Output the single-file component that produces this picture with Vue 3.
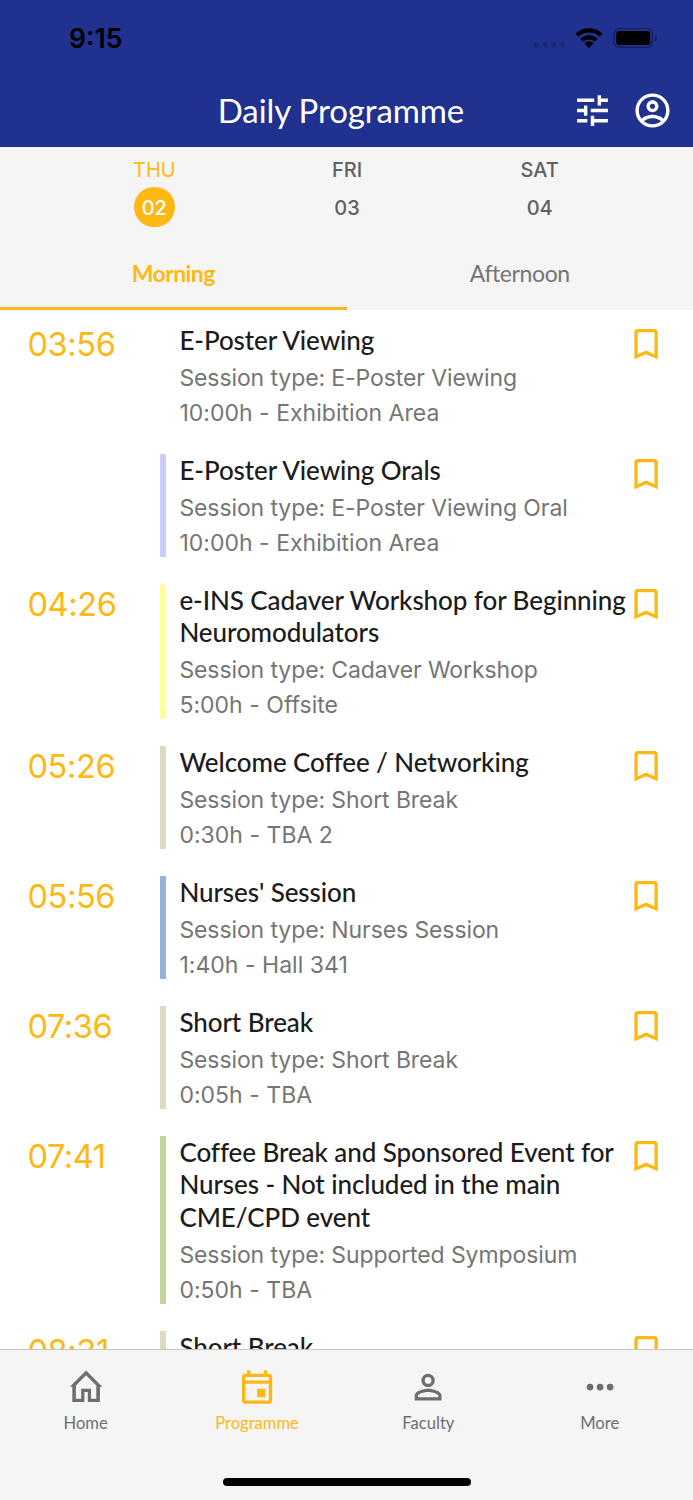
<!-- DailyProgramme.vue -->
<template>
  <div class="screen">
    <header class="header">
      <div class="status-bar">
        <span class="clock">9:15</span>
        <svg class="status-icons" viewBox="0 0 124 24">
          <g fill="#1b2873">
            <rect x="1" y="16" width="5.4" height="5.4" rx="1.8" />
            <rect x="9.4" y="16" width="5.4" height="5.4" rx="1.8" />
            <rect x="17.8" y="16" width="5.4" height="5.4" rx="1.8" />
            <rect x="26.2" y="16" width="5.4" height="5.4" rx="1.8" />
          </g>
          <g fill="none" stroke="#000" stroke-width="4.3">
            <path d="M44 9.2A17.6 17.6 0 0 1 68 9.2" />
            <path d="M48.7 14.2A10.6 10.6 0 0 1 63.3 14.2" />
          </g>
          <path d="M51.4 17.2A6.6 6.6 0 0 1 60.6 17.2L56 22.2Z" />
          <rect x="80.9" y="2.6" width="38.6" height="18.8" rx="5.4" fill="none" stroke="#151f5e" stroke-width="1.4" />
          <rect x="83.2" y="4.9" width="34" height="14.2" rx="3.4" />
          <path d="M122 8.8C124.4 10 124.4 14 122 15.2Z" fill="#151f5e" />
        </svg>
      </div>
      <div class="title-bar">
        <h1 class="page-title">Daily Programme</h1>
        <div class="actions">
          <svg class="action-icon" viewBox="0 0 24 24"><path :d="icons.tune" /></svg>
          <svg class="action-icon" viewBox="0 0 24 24"><path :d="icons.profile" /></svg>
        </div>
      </div>
    </header>

    <section class="filters">
      <div class="days">
        <button
          v-for="day in days"
          :key="day.date"
          class="day"
          :class="{ active: day.date === activeDay }"
          @click="activeDay = day.date"
        >
          <span class="day-name">{{ day.name }}</span>
          <span class="day-date">{{ day.date }}</span>
        </button>
      </div>
      <div class="periods">
        <button
          v-for="period in periods"
          :key="period"
          class="period"
          :class="{ active: period === activePeriod }"
          @click="activePeriod = period"
        >
          {{ period }}
        </button>
      </div>
    </section>

    <main class="sessions">
      <article v-for="(session, i) in sessions" :key="i" class="session">
        <span class="time">{{ session.time }}</span>
        <div class="details" :style="{ borderLeftColor: session.color }">
          <h2 class="session-title">{{ session.title }}</h2>
          <p v-if="session.type" class="meta">Session type: {{ session.type }}</p>
          <p v-if="session.info" class="meta info">{{ session.info }}</p>
        </div>
        <svg class="bookmark" viewBox="0 0 24 24"><path :d="icons.bookmark" /></svg>
      </article>
    </main>

    <footer class="footer">
      <nav class="nav">
        <a v-for="item in nav" :key="item.label" class="nav-item" :class="{ active: item.active }">
          <svg class="nav-icon" :viewBox="item.viewBox"><path fill-rule="evenodd" :d="item.icon" /></svg>
          <span class="nav-label">{{ item.label }}</span>
        </a>
      </nav>
      <div class="home-indicator"></div>
    </footer>
  </div>
</template>

<script setup>
import { ref } from 'vue'

const activeDay = ref('02')
const activePeriod = ref('Morning')

const days = [
  { name: 'THU', date: '02' },
  { name: 'FRI', date: '03' },
  { name: 'SAT', date: '04' }
]

const periods = ['Morning', 'Afternoon']

const sessions = [
  { time: '03:56', color: '#ffffff', title: 'E-Poster Viewing', type: 'E-Poster Viewing', info: '10:00h - Exhibition Area' },
  { time: '', color: '#ccccff', title: 'E-Poster Viewing Orals', type: 'E-Poster Viewing Oral', info: '10:00h - Exhibition Area' },
  { time: '04:26', color: '#ffff99', title: 'e-INS Cadaver Workshop for Beginning\nNeuromodulators', type: 'Cadaver Workshop', info: '5:00h - Offsite' },
  { time: '05:26', color: '#ddd9c3', title: 'Welcome Coffee / Networking', type: 'Short Break', info: '0:30h - TBA 2' },
  { time: '05:56', color: '#95b3d7', title: "Nurses' Session", type: 'Nurses Session', info: '1:40h - Hall 341' },
  { time: '07:36', color: '#ddd9c3', title: 'Short Break', type: 'Short Break', info: '0:05h - TBA' },
  { time: '07:41', color: '#c2d69b', title: 'Coffee Break and Sponsored Event for\nNurses - Not included in the main\nCME/CPD event', type: 'Supported Symposium', info: '0:50h - TBA' },
  { time: '08:31', color: '#ddd9c3', title: 'Short Break' }
]

const icons = {
  tune: 'M3 17v2h6v-2H3zM3 5v2h10V5H3zm10 16v-2h8v-2h-8v-2h-2v6h2zM7 9v2H3v2h4v2h2V9H7zm14 4v-2H11v2h10zm-6-4h2V7h4V5h-4V3h-2v6z',
  profile: 'M12 2A10 10 0 0 0 2 12A10 10 0 0 0 12 22A10 10 0 0 0 22 12A10 10 0 0 0 12 2M7.07 18.28C7.5 17.38 10.12 16.5 12 16.5C13.88 16.5 16.5 17.38 16.93 18.28C15.57 19.36 13.86 20 12 20C10.14 20 8.43 19.36 7.07 18.28M18.36 16.83C16.93 15.09 13.46 14.5 12 14.5C10.54 14.5 7.07 15.09 5.64 16.83C4.62 15.5 4 13.82 4 12C4 7.59 7.59 4 12 4C16.41 4 20 7.59 20 12C20 13.82 19.38 15.5 18.36 16.83M12 6C10.06 6 8.5 7.56 8.5 9.5C8.5 11.44 10.06 13 12 13C13.94 13 15.5 11.44 15.5 9.5C15.5 7.56 13.94 6 12 6M12 11A1.5 1.5 0 0 1 10.5 9.5A1.5 1.5 0 0 1 12 8A1.5 1.5 0 0 1 13.5 9.5A1.5 1.5 0 0 1 12 11Z',
  bookmark: 'M17 18L12 15.82L7 18V5H17M17 3H7A2 2 0 0 0 5 5V21L12 18L19 21V5C19 3.89 18.1 3 17 3Z'
}

const nav = [
  {
    label: 'Home',
    viewBox: '-2.1 -1 40.2 40.2',
    icon: 'M18 2.5L34.2 18.7H31.8V34H19.7V24H16.3V34H4.2V18.7H1.8ZM18 7.2L28.2 17.4V30.7H22.9V20.8H13.1V30.7H7.8V17.4Z'
  },
  {
    label: 'Programme',
    viewBox: '0 -1 24 24',
    active: true,
    icon: 'M19 3H18V1H16V3H8V1H6V3H5A2 2 0 0 0 3 5V19A2 2 0 0 0 5 21H19A2 2 0 0 0 21 19V5A2 2 0 0 0 19 3M19 19H5V9H19V19M19 7H5V5H19V7M12 12H17V17H12Z'
  },
  {
    label: 'Faculty',
    viewBox: '0 0 24 24',
    icon: 'M12 4A4 4 0 0 1 16 8A4 4 0 0 1 12 12A4 4 0 0 1 8 8A4 4 0 0 1 12 4M12 6A2 2 0 0 0 10 8A2 2 0 0 0 12 10A2 2 0 0 0 14 8A2 2 0 0 0 12 6M12 13C14.67 13 20 14.33 20 17V20H4V17C4 14.33 9.33 13 12 13M12 14.9C9.03 14.9 5.9 16.36 5.9 17V18.1H18.1V17C18.1 16.36 14.97 14.9 12 14.9Z'
  },
  {
    label: 'More',
    viewBox: '0 0 24 24',
    icon: 'M16 12A2 2 0 0 1 20 12A2 2 0 0 1 16 12M10 12A2 2 0 0 1 14 12A2 2 0 0 1 10 12M4 12A2 2 0 0 1 8 12A2 2 0 0 1 4 12Z'
  }
]
</script>

<style>
body {
  margin: 0;
  background: #fff;
}
</style>

<style scoped>
.screen {
  width: 693px;
  height: 1500px;
  display: flex;
  flex-direction: column;
  overflow: hidden;
  background: #fff;
  font-family: Inter, 'Liberation Sans', sans-serif;
}

button {
  padding: 0;
  border: none;
  background: none;
  font: inherit;
  cursor: pointer;
}

.header {
  height: 147.4px;
  flex: none;
  background: #21318f;
}

.status-bar {
  height: 74px;
  box-sizing: border-box;
  display: flex;
  justify-content: space-between;
  align-items: center;
  padding: 2px 36px 0 69px;
}

.clock {
  font-size: 26.6px;
  font-weight: 600;
  color: #000;
}

.status-icons {
  width: 124px;
  height: 24px;
}

.title-bar {
  height: 73px;
  display: grid;
  grid-template-columns: 1fr auto 1fr;
  align-items: center;
  padding: 0 20px 0 9px;
}

.page-title {
  grid-column: 2;
  margin: 0;
  padding-bottom: 2px;
  font-family: Lato, sans-serif;
  font-size: 33px;
  font-weight: 400;
  letter-spacing: -0.1px;
  color: #fff;
}

.actions {
  display: flex;
  justify-content: flex-end;
  gap: 19px;
}

.action-icon {
  width: 41px;
  height: 41px;
  fill: #fff;
}

.filters {
  height: 163px;
  flex: none;
  display: flex;
  flex-direction: column;
  justify-content: space-between;
  background: #f5f5f5;
}

.days {
  display: grid;
  grid-template-columns: repeat(3, 1fr);
  padding: 10px 57px 0 58px;
}

.day {
  display: flex;
  flex-direction: column;
  align-items: center;
  gap: 2.4px;
  font-size: 20px;
  font-weight: 450;
  color: #616161;
}

.day-name {
  line-height: 27px;
}

.day-date {
  width: 40.4px;
  height: 40.4px;
  line-height: 42px;
  border-radius: 50%;
}

.day.active .day-name {
  font-weight: 400;
  color: #fdb813;
}

.day.active .day-date {
  background: #fdb813;
  color: #fff;
}

.periods {
  display: grid;
  grid-template-columns: 1fr 1fr;
  height: 73px;
}

.period {
  padding-top: 2px;
  border-bottom: 3.4px solid transparent;
  font-family: Lato, sans-serif;
  font-size: 23px;
  letter-spacing: -0.4px;
  color: #757575;
}

.period.active {
  border-bottom-color: #fdb813;
  font-weight: 700;
  letter-spacing: -0.6px;
  color: #fdb813;
}

.sessions {
  flex: 1;
  min-height: 0;
  overflow: hidden;
  display: flex;
  flex-direction: column;
  gap: 27px;
  padding-top: 13.6px;
}

.session {
  flex: none;
  display: grid;
  grid-template-columns: 132px minmax(0, 1fr) 40px;
  align-items: start;
  padding: 0 27px 0 28px;
}

.time {
  margin-left: -0.6px;
  font-size: 32.6px;
  line-height: 40.6px;
  letter-spacing: -0.4px;
  color: #fdb813;
}

.details {
  border-left: 6.6px solid;
  padding-left: 13.4px;
}

.session-title {
  margin: 0;
  font-family: Lato, sans-serif;
  font-size: 26px;
  font-weight: 500;
  line-height: 32.5px;
  letter-spacing: -0.08px;
  font-variant-ligatures: none;
  white-space: pre;
  color: #1c1c1c;
}

.meta {
  margin: 0;
  padding-top: 7.6px;
  font-size: 23px;
  line-height: 29.2px;
  letter-spacing: -0.1px;
  color: #757575;
}

.meta.info {
  padding-top: 5.8px;
  margin-bottom: -1.4px;
  letter-spacing: 0.02px;
}

.bookmark {
  width: 40.2px;
  height: 40.2px;
  fill: #fdb813;
}

.footer {
  height: 151px;
  flex: none;
  box-sizing: border-box;
  display: flex;
  flex-direction: column;
  justify-content: space-between;
  align-items: center;
  padding: 17px 0 13.8px;
  border-top: 1px solid #c4c4c4;
  background: #f5f5f5;
}

.nav {
  width: 100%;
  box-sizing: border-box;
  display: grid;
  grid-template-columns: repeat(4, 1fr);
  padding-right: 7.6px;
}

.nav-item {
  display: flex;
  flex-direction: column;
  align-items: center;
  gap: 5px;
  color: #6e6e6e;
}

.nav-item.active {
  color: #fdb813;
}

.nav-icon {
  width: 40.2px;
  height: 40.2px;
  fill: currentColor;
}

.nav-label {
  font-family: Lato, sans-serif;
  font-size: 16.6px;
  line-height: 22px;
}

.home-indicator {
  width: 248px;
  height: 8.6px;
  border-radius: 5px;
  background: #000;
}
</style>
